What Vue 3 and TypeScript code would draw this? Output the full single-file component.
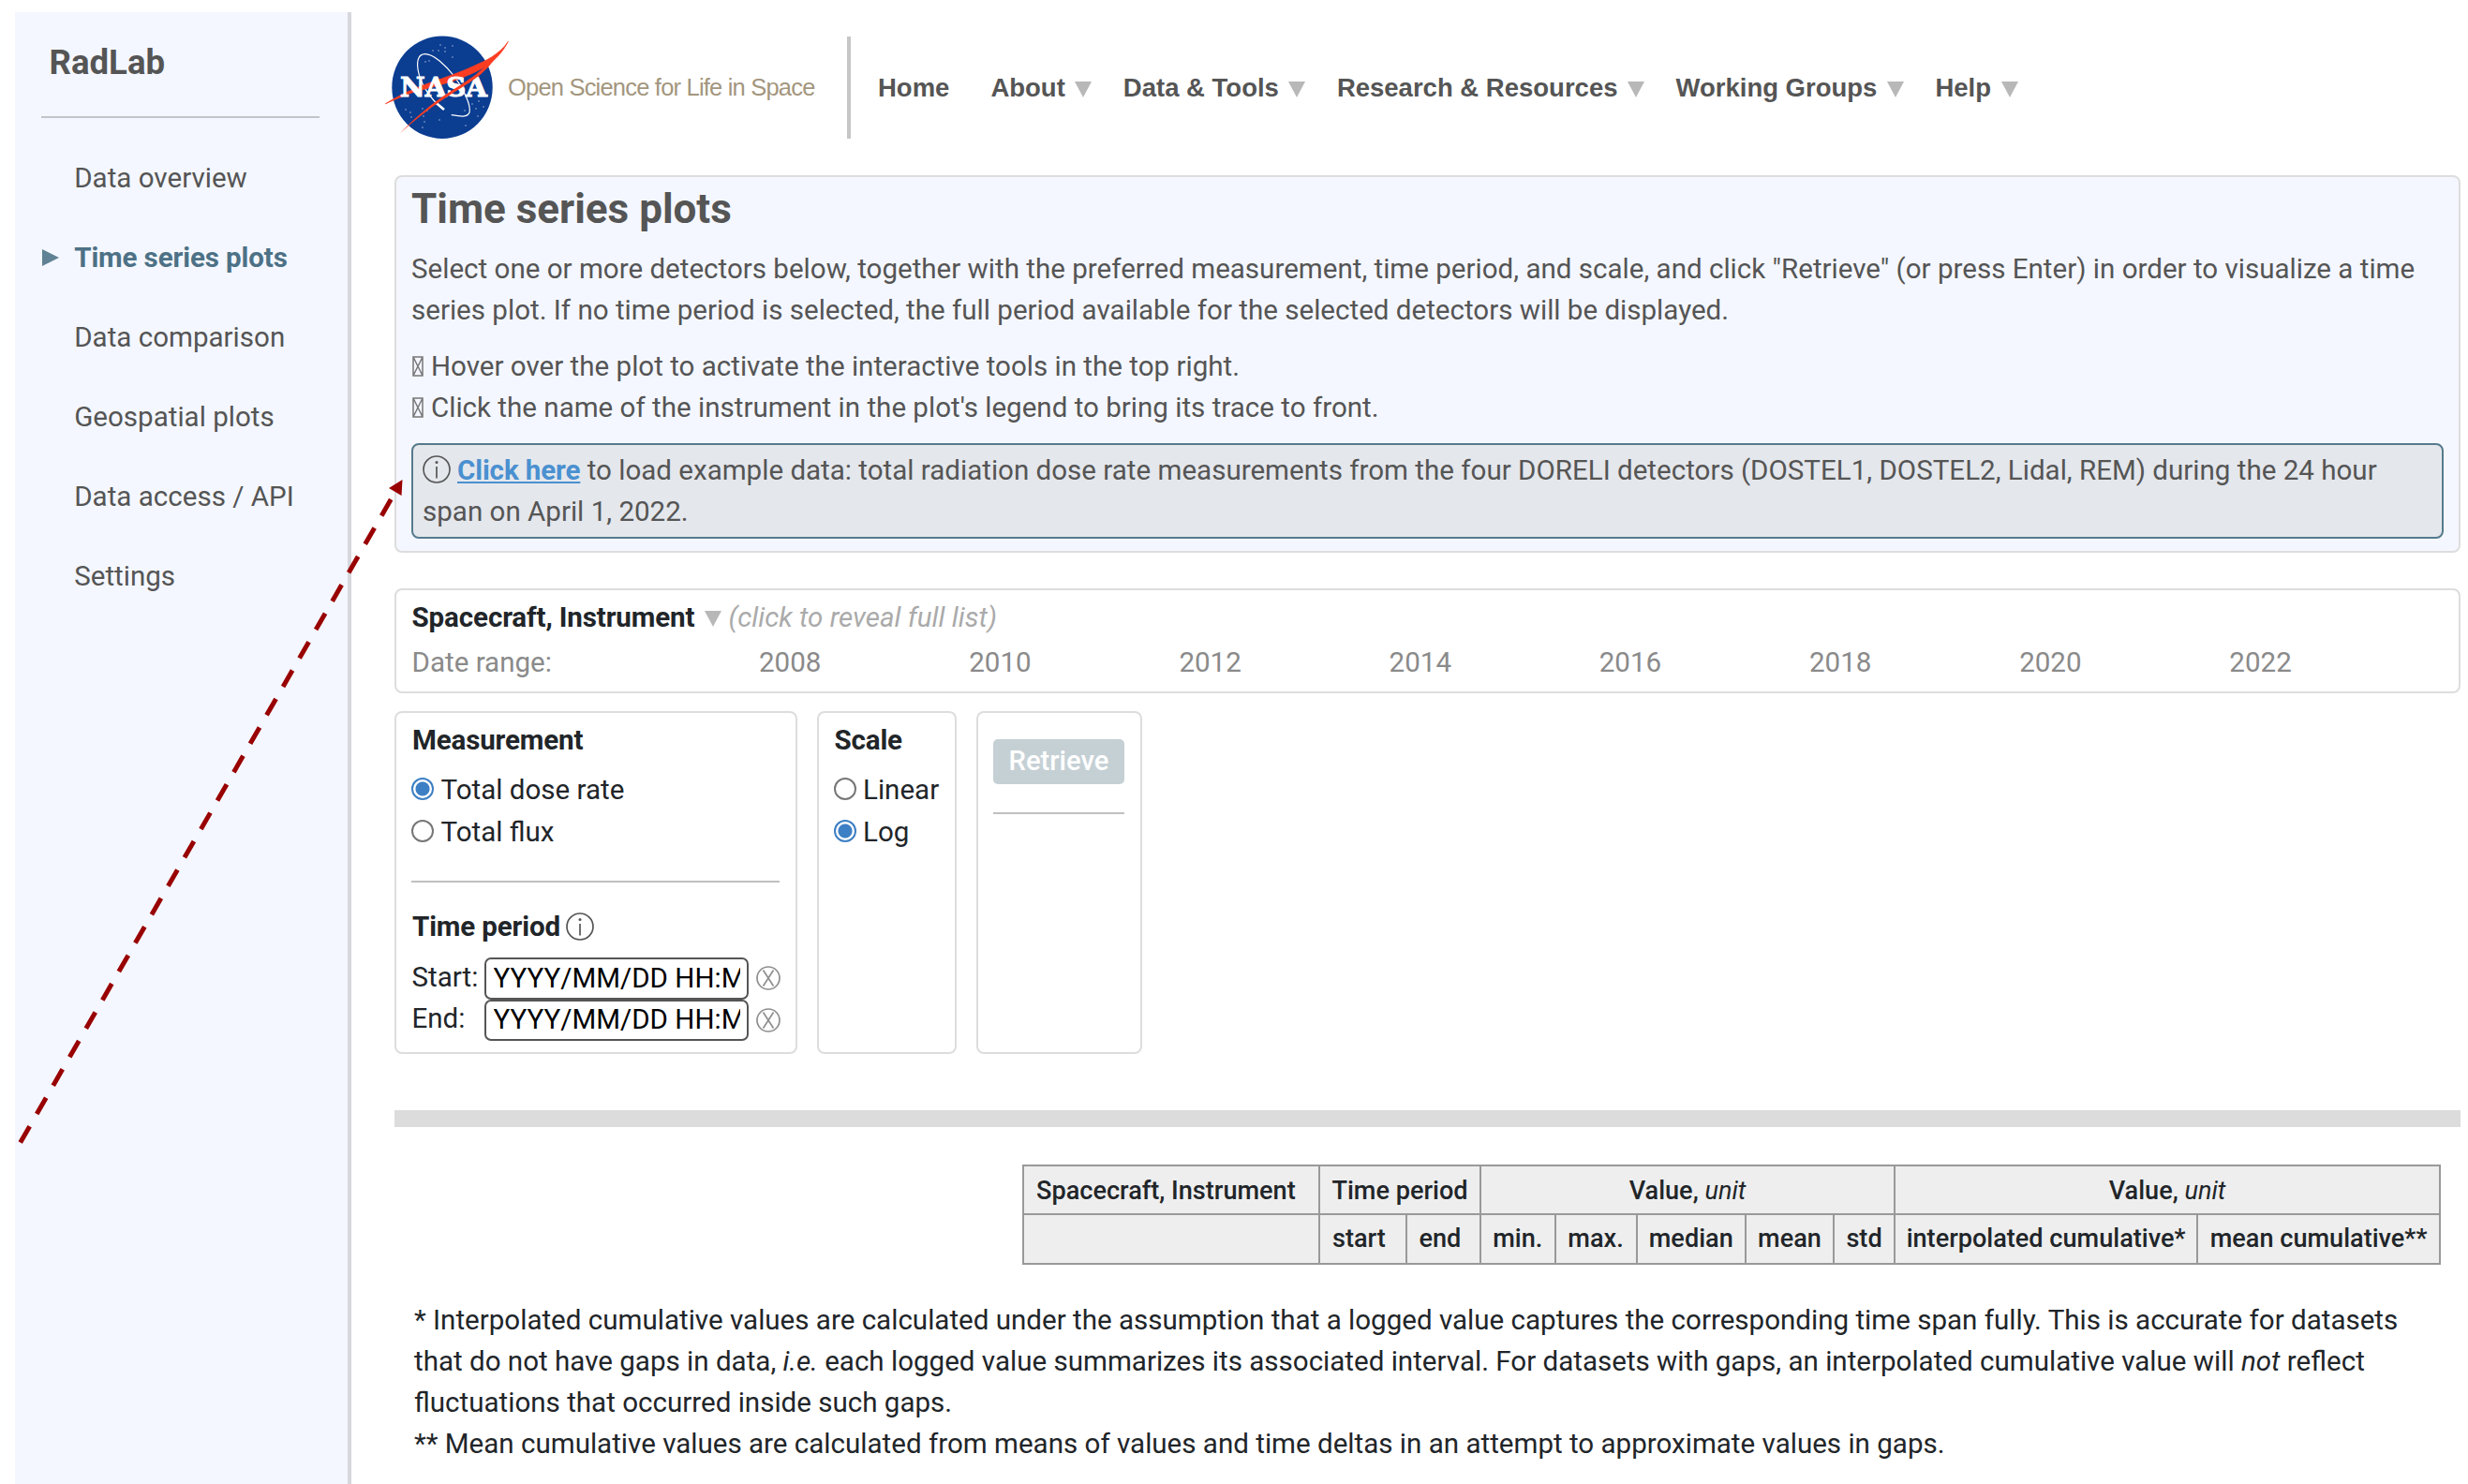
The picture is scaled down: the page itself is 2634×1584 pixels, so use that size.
<script setup lang="ts">
import { ref } from 'vue'

interface MenuItem {
  label: string
  dropdown: boolean
}

const sections: string[] = [
  'Data overview',
  'Time series plots',
  'Data comparison',
  'Geospatial plots',
  'Data access / API',
  'Settings',
]
const activeSection = ref('Time series plots')

const menu: MenuItem[] = [
  { label: 'Home', dropdown: false },
  { label: 'About', dropdown: true },
  { label: 'Data & Tools', dropdown: true },
  { label: 'Research & Resources', dropdown: true },
  { label: 'Working Groups', dropdown: true },
  { label: 'Help', dropdown: true },
]

const years: number[] = [2008, 2010, 2012, 2014, 2016, 2018, 2020, 2022]

const measurement = ref('Total dose rate')
const scale = ref('Log')
const start = ref('YYYY/MM/DD HH:MM')
const end = ref('YYYY/MM/DD HH:MM')

// Faint star specks on the agency emblem
const stars: [number, number][] = [
  [60, 10], [65, 13], [73, 11], [65, 17], [52, 16], [58, 16], [73, 23], [44, 28], [48, 27],
  [23, 79], [28, 82], [29, 87], [41, 78], [46, 80], [42, 86], [43, 92], [41, 98],
  [94, 73], [101, 70], [98, 78], [106, 76], [100, 86], [86, 80], [87, 96], [59, 90],
]
</script>

<template>
  <div class="page">
    <aside class="sidebar">
      <h2 class="brand">RadLab</h2>
      <nav class="sections">
        <a
          v-for="s in sections"
          :key="s"
          class="section"
          :class="{ active: s === activeSection }"
          @click="activeSection = s"
        >
          <svg v-if="s === activeSection" class="marker" viewBox="0 0 18 18"><path d="M0 0L18 9L0 18Z" /></svg>
          <span>{{ s }}</span>
        </a>
      </nav>
    </aside>

    <main class="content">
      <header class="top">
        <svg class="logo" viewBox="0 0 134 112">
          <ellipse cx="62" cy="55.300" rx="53.700" ry="54.700" fill="#0b3d91" />
          <g fill="#fff" opacity="0.6">
            <circle v-for="(p, i) in stars" :key="i" :cx="p[0]" :cy="p[1]" r="0.8" />
          </g>
          <path
            d="M63.300 78.700C49 68 38 50 36 36C34.500 26 37 20 43.300 19.700C53 19.500 66 32 75 43.700C85 57 93 75 91 82C89 87.500 82 86.500 71.700 84.700"
            fill="none" stroke="#fff" stroke-width="1.200"
          />
          <path d="M55 71.500L64 79" stroke="#fff" stroke-width="2.600" />
          <path d="M1.300 72.800C12 66 26 59 38.300 54.300C47 51 55 48 63.300 45.300C75 41 86 37 95 32.700C103 29 109 26.500 115 22.700C122 18 128 13 132.300 6.300C127 17 119 26 108.300 33C98 39 86 44 75 48C58 54 45 56 28 61.500C19 65 10 69 1.300 72.800Z" fill="#fc3d21" stroke="#fc3d21" stroke-width="0.700" />
          <text x="17" y="65" textLength="93" lengthAdjust="spacingAndGlyphs" class="logo-text">NASA</text>
          <path d="M16.500 104.500C30 91 44 78 60.700 66.200C74 57 90 48 102 38C110 31 116 25 120 20C118 27 110 35 104 40.500C92 51 76 59 62.700 68.200C46 79 31 92 16.500 104.500Z" fill="#fc3d21" />
        </svg>
        <span class="tagline">Open Science for Life in Space</span>
        <nav class="menu">
          <a v-for="m in menu" :key="m.label" class="menu-item">
            <span class="menu-label">{{ m.label }}</span>
            <svg v-if="m.dropdown" class="caret" viewBox="0 0 18 17"><path d="M0 0H18L9 17Z" /></svg>
          </a>
        </nav>
      </header>

      <section class="card intro">
        <h1 class="title">Time series plots</h1>
        <p class="lead">
          Select one or more detectors below, together with the preferred measurement, time period, and scale, and click
          "Retrieve" (or press Enter) in order to visualize a time<br />series plot. If no time period is selected, the
          full period available for the selected detectors will be displayed.
        </p>
        <ul class="tips">
          <li>
            <svg class="tofu" viewBox="0 0 12 22"><path d="M1 1H11V21H1ZM1 1L11 21M11 1L1 21" /></svg>
            <span>Hover over the plot to activate the interactive tools in the top right.</span>
          </li>
          <li>
            <svg class="tofu" viewBox="0 0 12 22"><path d="M1 1H11V21H1ZM1 1L11 21M11 1L1 21" /></svg>
            <span>Click the name of the instrument in the plot's legend to bring its trace to front.</span>
          </li>
        </ul>
        <div class="example">
          <svg class="info" viewBox="0 0 30 30"><circle cx="15" cy="15" r="14" /><path d="M15 12V24.500" /><circle class="dot" cx="15" cy="7.500" r="1.500" /></svg>
          <a class="link">Click here</a> to load example data: total radiation dose rate measurements from the four
          DORELI detectors (DOSTEL1, DOSTEL2, Lidal, REM) during the 24 hour<br />span on April 1, 2022.
        </div>
      </section>

      <section class="card instruments">
        <div class="instr-head">
          <strong>Spacecraft, Instrument</strong>
          <svg class="caret" viewBox="0 0 18 17"><path d="M0 0H18L9 17Z" /></svg>
          <em>(click to reveal full list)</em>
        </div>
        <div class="range">
          <span class="range-label">Date range:</span>
          <span v-for="y in years" :key="y" class="year">{{ y }}</span>
        </div>
      </section>

      <div class="controls">
        <section class="card measure">
          <h3>Measurement</h3>
          <label v-for="m in ['Total dose rate', 'Total flux']" :key="m" class="option" @click="measurement = m">
            <i class="radio" :class="{ on: measurement === m }"></i>{{ m }}
          </label>
          <hr />
          <h3 class="period">
            <span>Time period</span>
            <svg class="info" viewBox="0 0 30 30"><circle cx="15" cy="15" r="14" /><path d="M15 12V24.500" /><circle class="dot" cx="15" cy="7.500" r="1.500" /></svg>
          </h3>
          <div class="field">
            <span class="field-label">Start:</span>
            <input v-model="start" type="text" />
            <svg class="clear" viewBox="0 0 26 26"><circle cx="13" cy="13" r="12" /><path d="M7.500 4.500L18.500 21.500M18.500 4.500L7.500 21.500" /></svg>
          </div>
          <div class="field">
            <span class="field-label">End:</span>
            <input v-model="end" type="text" />
            <svg class="clear" viewBox="0 0 26 26"><circle cx="13" cy="13" r="12" /><path d="M7.500 4.500L18.500 21.500M18.500 4.500L7.500 21.500" /></svg>
          </div>
        </section>
        <section class="card scale">
          <h3>Scale</h3>
          <label v-for="s in ['Linear', 'Log']" :key="s" class="option" @click="scale = s">
            <i class="radio" :class="{ on: scale === s }"></i>{{ s }}
          </label>
        </section>
        <section class="card submit">
          <button type="button">Retrieve</button>
          <hr />
        </section>
      </div>

      <div class="bar"></div>

      <table class="stats">
        <colgroup>
          <col style="width: 316px" /><col style="width: 92.5px" /><col style="width: 79.5px" />
          <col style="width: 79.5px" /><col style="width: 87px" /><col style="width: 116.5px" />
          <col style="width: 94px" /><col style="width: 65px" /><col style="width: 323px" /><col style="width: 259px" />
        </colgroup>
        <tbody>
          <tr class="groups">
            <th class="left">Spacecraft, Instrument</th>
            <th colspan="2">Time period</th>
            <th colspan="5">Value, <em>unit</em></th>
            <th colspan="2">Value, <em>unit</em></th>
          </tr>
          <tr>
            <th></th>
            <th class="left">start</th>
            <th class="left">end</th>
            <th>min.</th>
            <th>max.</th>
            <th>median</th>
            <th>mean</th>
            <th>std</th>
            <th>interpolated cumulative*</th>
            <th>mean cumulative**</th>
          </tr>
        </tbody>
      </table>

      <div class="notes">
        * Interpolated cumulative values are calculated under the assumption that a logged value captures the
        corresponding time span fully. This is accurate for datasets<br />that do not have gaps in data,
        <em>i.e.</em> each logged value summarizes its associated interval. For datasets with gaps, an interpolated
        cumulative value will <em>not</em> reflect<br />fluctuations that occurred inside such gaps.<br />** Mean
        cumulative values are calculated from means of values and time deltas in an attempt to approximate values in
        gaps.
      </div>
    </main>

    <svg class="pointer" viewBox="0 0 440 1240">
      <path d="M21.700 1219.500L423 523" stroke="#900" stroke-width="5" stroke-dasharray="20 15.100" />
      <path d="M429.500 512L415 521L428.500 529Z" fill="#900" />
    </svg>
  </div>
</template>

<style>
body {
  background: #fff;
  overflow: hidden;
}
</style>

<style scoped>
.page {
  position: relative;
  display: flex;
  width: 2634px;
  height: 1584px;
  overflow: hidden;
  box-sizing: border-box;
  padding: 10px 8px 0 16px;
  font-family: Roboto, "Liberation Sans", sans-serif;
  font-size: 29.550px;
  line-height: 44.330px;
  color: #212529;
}
.page * {
  box-sizing: border-box;
}
.page :where(h1, h2, h3, p, ul, hr) {
  margin: 0;
  padding: 0;
}
.sidebar {
  flex: none;
  width: 359px;
  margin-top: 3px;
  background: #f4f7ff;
  border-right: 4px solid #d5d7dc;
  padding: 29px 30px 0 28px;
  color: #555;
}
.brand {
  height: 84px;
  padding-left: 8.500px;
  border-bottom: 2px solid #c2c4c9;
  font-size: 36.600px;
  line-height: 50px;
  font-weight: 700;
}
.sections {
  display: flex;
  flex-direction: column;
  padding-top: 21.200px;
}
.section {
  display: flex;
  align-items: center;
  height: 85px;
  padding-left: 35.200px;
  white-space: nowrap;
}
.section.active {
  padding-left: 1px;
  color: #4d7186;
  font-weight: 700;
  letter-spacing: -0.120px;
}
.marker {
  width: 18px;
  height: 18px;
  margin-right: 16.200px;
  fill: #608294;
}
.content {
  flex: none;
  width: 2205px;
  margin-left: 46px;
}
.top {
  display: flex;
  align-items: center;
  height: 177px;
  margin-left: -11px;
  padding-bottom: 10px;
}
.logo {
  flex: none;
  width: 134px;
  height: 112px;
}
.logo-text {
  font: 700 28px "DejaVu Serif", serif;
  fill: #fff;
  stroke: #fff;
  stroke-width: 1px;
}
.tagline {
  flex: none;
  width: 362px;
  margin-left: -2px;
  font: 25.500px "Liberation Sans", sans-serif;
  letter-spacing: -0.800px;
  white-space: nowrap;
  color: #a3967e;
}
.menu {
  display: flex;
  align-items: center;
  height: 109px;
  border-left: 4px solid #c6c6c6;
  padding-left: 29px;
  font: 700 27.500px "Liberation Sans", sans-serif;
  color: #555;
}
.menu-label {
  padding-top: 1px;
}
.menu-item {
  display: flex;
  align-items: center;
  margin-right: 33.500px;
  white-space: nowrap;
}
.menu-item:first-child {
  margin-right: 44px;
}
.caret {
  flex: none;
  width: 18px;
  height: 17px;
  margin-left: 11px;
  fill: #b8b8b8;
}
.menu .caret {
  margin: 3px 0 0 10.500px;
}
.card {
  border: 2px solid #ddd;
  border-radius: 8px;
}
.intro {
  height: 403px;
  padding: 8px 16px 0;
  background: #f4f7ff;
  color: #555;
}
.title {
  font-size: 44px;
  line-height: 52px;
  font-weight: 700;
}
.lead {
  margin-top: 16px;
  white-space: nowrap;
}
.tips {
  margin-top: 15px;
  list-style: none;
}
.tips li {
  display: flex;
  align-items: center;
}
.tofu {
  width: 12px;
  height: 22px;
  margin: 0 8px 0 1px;
  fill: none;
  stroke: #777;
  stroke-width: 1.5;
}
.example {
  height: 102px;
  margin-top: 15.200px;
  padding: 5.500px 10px 0;
  border: 2px solid #557b8d;
  border-radius: 8px;
  background: #e4e7ec;
  white-space: nowrap;
}
.info {
  width: 30px;
  height: 30px;
  fill: none;
  stroke: #555;
  stroke-width: 1.7;
}
.info .dot {
  fill: #555;
  stroke: none;
}
.example .info {
  margin-right: 7px;
  vertical-align: -4px;
}
.link {
  color: #4a90d0;
  font-weight: 700;
  letter-spacing: -0.120px;
  text-decoration: underline;
}
.instruments {
  height: 112px;
  margin-top: 38px;
  padding: 6.500px 16.500px;
}
.instr-head {
  display: flex;
  align-items: center;
  height: 48px;
  line-height: 44px;
  padding-bottom: 4px;
}
.instr-head .caret {
  margin: 3px 0 0 10.500px;
}
.instr-head em {
  margin-left: 7.500px;
  color: #aaa;
}
.instr-head strong {
  font-weight: 700;
  letter-spacing: -0.120px;
}
.range {
  display: flex;
  color: #8a8a8a;
}
.range-label {
  width: 370.500px;
}
.year {
  width: 224.200px;
}
.controls {
  display: flex;
  gap: 20.500px;
  height: 366px;
  margin-top: 19px;
}
.controls .card {
  padding: 6.500px 17px 0;
}
.measure {
  width: 430px;
}
.scale {
  width: 149.500px;
}
.controls .submit {
  width: 177px;
  padding: 28px 16.500px 0;
}
h3 {
  height: 53.800px;
  font-size: 29.550px;
  font-weight: 700;
  letter-spacing: -0.150px;
  white-space: nowrap;
}
.option {
  display: flex;
  align-items: center;
  white-space: nowrap;
}
.radio {
  flex: none;
  width: 24px;
  height: 24px;
  margin: 0 7.500px 2px -1px;
  border: 2px solid #777;
  border-radius: 50%;
}
.radio.on {
  border-color: #3d7fc4;
  background: radial-gradient(circle, #3d7fc4 7px, #fff 8px);
}
hr {
  height: 2px;
  border: 0;
  background: #c0c0c0;
}
.measure hr {
  margin: 30px 0 25px -1px;
}
.period {
  display: flex;
  align-items: center;
}
.period .info {
  margin: -9px 0 0 6.500px;
}
.period span {
  height: 53.800px;
}
.field {
  display: flex;
  align-items: center;
  height: 44.500px;
}
.field-label {
  flex: none;
  width: 77px;
  margin-left: -0.500px;
}
input {
  flex: none;
  width: 282px;
  height: 44.500px;
  margin-top: 3px;
  padding: 0 7px 2px 8px;
  border: 2px solid #555;
  border-radius: 7px;
  background: #fff;
  font: 29.550px Roboto, sans-serif;
  color: #000;
}
.clear {
  flex: none;
  width: 26px;
  height: 26px;
  margin: 2px 0 0 8px;
  fill: none;
  stroke: #8f8f8f;
  stroke-width: 1.7;
}
button {
  display: block;
  width: 140px;
  height: 48px;
  padding: 0 0 2px;
  border: 0;
  border-radius: 5px;
  background: #c5d0d5;
  font: 500 29.200px Roboto, sans-serif;
  color: #fff;
}
.submit hr {
  width: 140px;
  margin-top: 30px;
}
.bar {
  height: 18px;
  margin-top: 60px;
  background: #dcdcdc;
}
.stats {
  width: 1512.500px;
  margin: 40px 0 0 670px;
  table-layout: fixed;
  border-collapse: collapse;
  font-size: 27.100px;
  line-height: 40px;
}
.stats th {
  height: 53px;
  padding: 0 0 1px;
  border: 2px solid #999;
  background: #eee;
  font-weight: 500;
  text-align: center;
  white-space: nowrap;
}
.stats .groups th {
  height: 52px;
  padding: 1px 0 0;
}
.stats th.left,
.stats .groups th.left {
  padding-left: 13px;
  text-align: left;
}
.stats em {
  font-weight: 400;
}
.notes {
  margin: 36.500px 0 0 21px;
  white-space: nowrap;
}
.pointer {
  position: absolute;
  left: 0;
  top: 0;
  width: 440px;
  height: 1240px;
  fill: none;
  pointer-events: none;
}
</style>
